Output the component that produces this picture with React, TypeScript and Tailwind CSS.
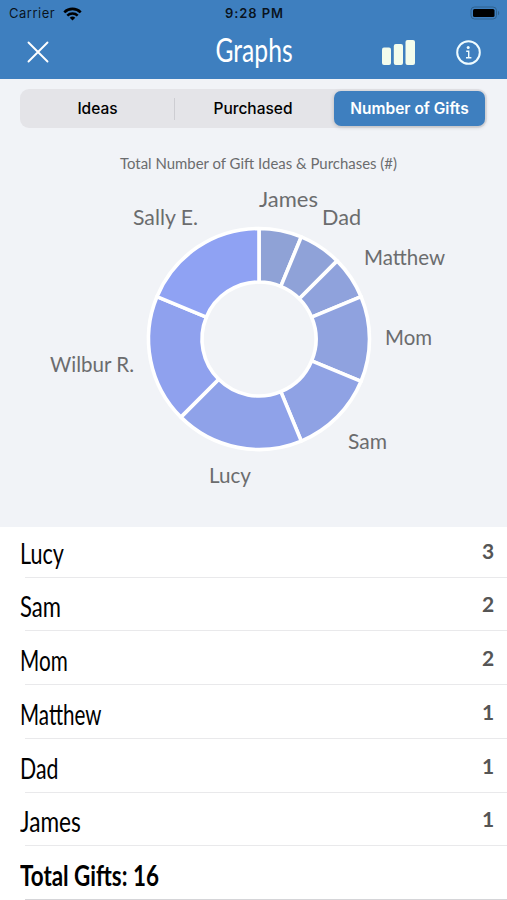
import clsx from "clsx";
import { useState } from "react";

const TABS = [
  { label: "Ideas", size: "w-[153px] pr-[1px]" },
  { label: "Purchased", size: "w-[159px] pr-[3px]" },
  { label: "Number of Gifts", size: "w-[151px]" },
];

const SLICES = [
  { name: "James", count: 1, color: "#8fa2d6", x: 259, y: 207, width: 59 },
  { name: "Dad", count: 1, color: "#8fa2d8", x: 322, y: 225, width: 39 },
  { name: "Matthew", count: 1, color: "#8fa2dc", x: 364, y: 265, width: 81 },
  { name: "Mom", count: 2, color: "#8fa2df", x: 385, y: 345, width: 47 },
  { name: "Sam", count: 2, color: "#8fa2e4", x: 348, y: 448.5, width: 39 },
  { name: "Lucy", count: 3, color: "#8fa2e9", x: 209, y: 482.5, width: 42 },
  { name: "Wilbur R.", count: 3, color: "#8fa1ee", x: 50, y: 372, width: 84 },
  { name: "Sally E.", count: 3, color: "#8fa2f3", x: 133, y: 225, width: 65 },
];

const ROWS = [
  { name: "Lucy", count: 3, scale: "scale-x-[0.77]" },
  { name: "Sam", count: 2, scale: "scale-x-[0.79]" },
  { name: "Mom", count: 2, scale: "scale-x-[0.74]" },
  { name: "Matthew", count: 1, scale: "scale-x-[0.735]" },
  { name: "Dad", count: 1, scale: "scale-x-[0.76]" },
  { name: "James", count: 1, scale: "scale-x-[0.81]" },
];

export default function App() {
  return (
    <div className="flex h-[900px] w-[507px] flex-col overflow-hidden bg-white font-[Inter,sans-serif]">
      <header className="h-[79px] shrink-0 bg-[#3e7fbf]">
        <StatusBar />
        <NavBar />
      </header>
      <section className="h-[448px] shrink-0 bg-[#f1f3f7] pt-[10px]">
        <SegmentedControl />
        <DonutChart />
      </section>
      <GiftList />
    </div>
  );
}

const StatusBar = () => {
  return (
    <div className="grid h-[27px] grid-cols-3 items-center pr-[7px] pl-[9px] text-[13px] text-black/85">
      <div className="flex items-center gap-[9px]">
        <span className="tracking-[0.5px]">Carrier</span>
        <svg width="19" height="14" viewBox="0 0 19 14" className="-ml-[1px]" fill="none" stroke="#000">
          <path d="M1.3 5.3a11.6 11.6 0 0 1 16.4 0" strokeWidth="2.6" />
          <path d="M4.3 8.6a7.4 7.4 0 0 1 10.4 0" strokeWidth="2.5" />
          <path d="M9.5 13.6 6.7 10.8a4 4 0 0 1 5.6 0Z" fill="#000" stroke="none" />
        </svg>
      </div>
      <span className="text-center font-semibold tracking-[0.9px] whitespace-nowrap">9:28 PM</span>
      <svg className="-mt-px justify-self-end" width="30" height="14" viewBox="0 0 30 14">
        <rect x="1" y="1" width="25.5" height="12" rx="3.5" fill="none" stroke="#2f628f" />
        <rect x="3" y="3" width="21.5" height="8" rx="1.5" fill="#000" />
        <path d="M28 4.7c1.7.8 1.7 3.8 0 4.6Z" fill="#2f628f" />
      </svg>
    </div>
  );
};

const NavBar = () => {
  return (
    <div className="grid h-[50px] grid-cols-3 items-center pr-[26px] pl-[27px]">
      <button aria-label="Close" className="w-[22px]">
        <svg width="22" height="22" viewBox="0 0 22 22" stroke="#fff" strokeWidth="1.9" strokeLinecap="round">
          <path d="M1.5 1.5 20.5 20.5M20.5 1.5 1.5 20.5" />
        </svg>
      </button>
      <h1 className="flex justify-center pb-[5px] font-[Lato,sans-serif] text-[32px] leading-[40px] text-white">
        <span className="inline-block scale-x-[0.77]">Graphs</span>
      </h1>
      <div className="flex items-center justify-end gap-[41px]">
        <svg width="33" height="25" viewBox="0 0 33 25" fill="#f3fcec">
          <rect x="0" y="7.5" width="9" height="17.5" rx="2" />
          <rect x="11.8" y="4" width="9.2" height="21" rx="2" />
          <rect x="23.5" y="0" width="9.5" height="25" rx="2" />
        </svg>
        <svg width="25" height="25" viewBox="0 0 25 25" fill="none" stroke="#effcff">
          <circle cx="12.5" cy="12.5" r="11.3" strokeWidth="2" />
          <circle cx="12.2" cy="7.4" r="1.5" fill="#effcff" stroke="none" />
          <path d="M10.2 11.2h2.5v6.2M10 17.7h5.4" strokeWidth="1.4" />
        </svg>
      </div>
    </div>
  );
};

const SegmentedControl = () => {
  const [activeIndex, setActiveIndex] = useState(2);

  return (
    <div className="mx-[20px] flex h-[39px] items-center rounded-[9px] bg-[#e4e4e8] p-[2px]">
      {TABS.map((tab, index) => {
        const isActive = index === activeIndex;
        return (
          <button
            key={tab.label}
            onClick={() => setActiveIndex(index)}
            className={clsx(
              "flex items-center justify-center text-[15.5px] font-medium",
              tab.size,
              isActive
                ? "h-[35px] rounded-[7px] bg-[#3e7fbf] font-semibold text-white shadow-[0_1px_4px_rgba(0,0,0,0.2)]"
                : "h-[22px] text-black",
              index === 0 && "border-r border-[#cdcdd2]"
            )}
          >
            {tab.label}
          </button>
        );
      })}
    </div>
  );
};

const CENTER_X = 259;
const CENTER_Y = 339;
const OUTER = 110.5;
const INNER = 57;
const TOTAL = SLICES.reduce((sum, slice) => sum + slice.count, 0);

const point = (radius: number, turn: number) => {
  const angle = turn * Math.PI * 2;
  const x = CENTER_X + radius * Math.sin(angle);
  const y = CENTER_Y - radius * Math.cos(angle);
  return `${x.toFixed(2)} ${y.toFixed(2)}`;
};

const slicePath = (from: number, to: number) =>
  `M${point(OUTER, from)}A${OUTER} ${OUTER} 0 0 1 ${point(OUTER, to)}` +
  `L${point(INNER, to)}A${INNER} ${INNER} 0 0 0 ${point(INNER, from)}Z`;

const DonutChart = () => {
  let start = 0;

  return (
    <svg
      width="507"
      height="399"
      viewBox="0 128 507 399"
      className="block font-[Lato,sans-serif]"
      fill="#6b6c6e"
    >
      <text x="120" y="169" fontSize="14.5" textLength="277" lengthAdjust="spacingAndGlyphs">
        Total Number of Gift Ideas &amp; Purchases (#)
      </text>
      {SLICES.map((slice) => {
        const from = start / TOTAL;
        start += slice.count;
        return (
          <path
            key={slice.name}
            d={slicePath(from, start / TOTAL)}
            fill={slice.color}
            stroke="#fff"
            strokeWidth="3.6"
            strokeLinejoin="round"
          />
        );
      })}
      {SLICES.map((slice) => (
        <text
          key={slice.name}
          x={slice.x}
          y={slice.y}
          fontSize="21"
          textLength={slice.width}
          lengthAdjust="spacingAndGlyphs"
        >
          {slice.name}
        </text>
      ))}
    </svg>
  );
};

const GiftList = () => {
  return (
    <ul className="font-[Lato,sans-serif] text-black">
      {ROWS.map((row, index) => (
        <li key={row.name}>
          <div
            className={clsx(
              "flex items-end justify-between pr-[3px] pl-[20px]",
              index === 0 ? "h-[49.5px]" : "h-[52.8px]"
            )}
          >
            <span className={clsx("inline-block origin-left pb-[6px] text-[28px] leading-[36px]", row.scale)}>
              {row.name}
            </span>
            <span className="w-[22px] pb-[12px] text-[21px] leading-[28px] font-bold text-[#555]">
              {row.count}
            </span>
          </div>
          <div className="ml-[25px] h-px bg-[#e9e9eb]" />
        </li>
      ))}
      <li>
        <div className="flex h-[52.8px] items-end pl-[20px]">
          <span className="inline-block origin-left scale-x-[0.8] pb-[6px] text-[28px] leading-[36px] font-bold whitespace-nowrap">
            Total Gifts: 16
          </span>
        </div>
        <div className="ml-[25px] h-px bg-[#d5d5d8]" />
      </li>
    </ul>
  );
};
